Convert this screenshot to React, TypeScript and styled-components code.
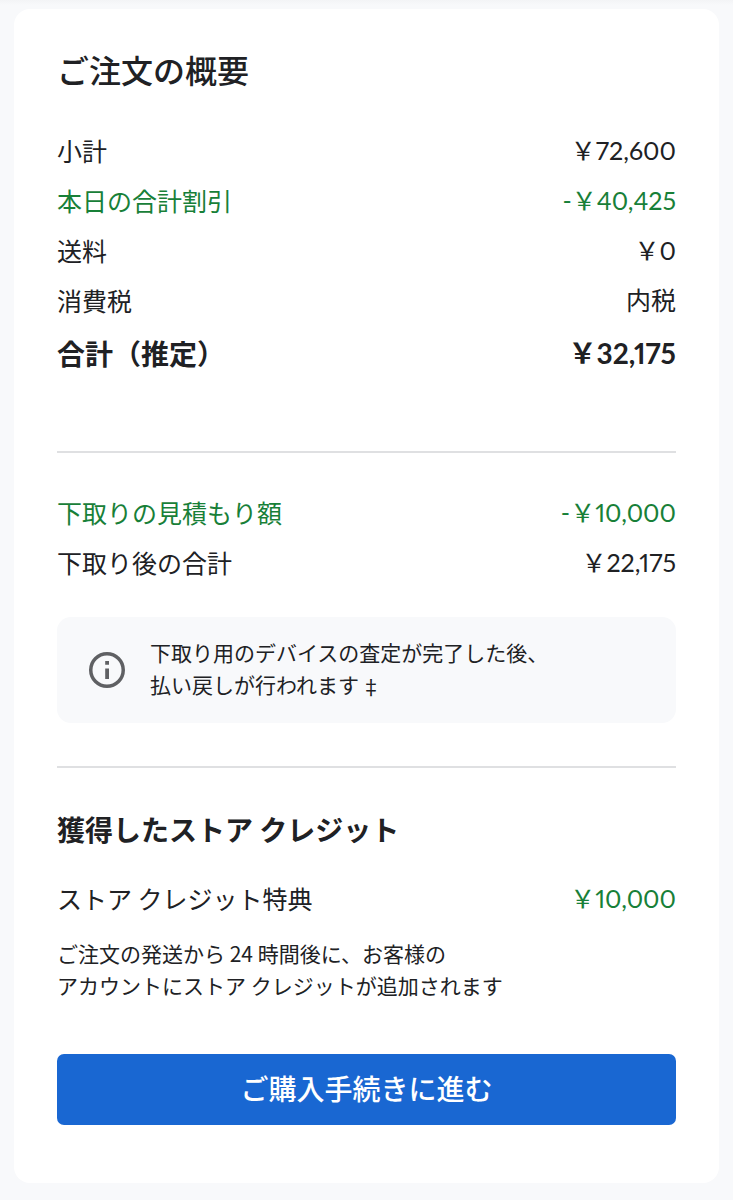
import React from "react";
import styled, { createGlobalStyle } from "styled-components";

const colors = {
  page: "#f8f9fb",
  card: "#ffffff",
  text: "#202124",
  green: "#188038",
  line: "#dfe0e2",
  icon: "#5f6063",
  blue: "#1967d2",
};

const GlobalStyle = createGlobalStyle`
  *, *::before, *::after { box-sizing: border-box; }
  body {
    margin: 0;
    background: ${colors.page};
    color: ${colors.text};
    font-family: "Noto Sans CJK JP", sans-serif;
  }
`;

const Page = styled.main`
  min-height: 100vh;
  padding: 9px 14px 17px;
  background: linear-gradient(#f3f4f6, ${colors.page} 5px);
`;

const Card = styled.section`
  padding: 40px 43px 58px;
  border-radius: 16px;
  background: ${colors.card};
`;

const Title = styled.h1`
  margin: 0 0 36px;
  font-size: 32px;
  line-height: 40px;
  font-weight: 500;
`;

const SubTitle = styled.h2`
  margin: 0 0 24px;
  font-size: 28px;
  line-height: 40px;
  font-weight: 700;
`;

const Rows = styled.dl`
  margin: 0;
`;

const Row = styled.div<{ $total?: boolean }>`
  display: flex;
  justify-content: space-between;
  gap: 16px;
  font-size: ${(p) => (p.$total ? 28 : 25)}px;
  font-weight: ${(p) => (p.$total ? 700 : 400)};
  line-height: ${(p) => (p.$total ? 56 : 50)}px;
`;

const Label = styled.dt<{ $green?: boolean }>`
  color: ${(p) => (p.$green ? colors.green : colors.text)};
`;

const Amount = styled.dd<{ $green?: boolean }>`
  margin: 0;
  color: ${(p) => (p.$green ? colors.green : colors.text)};
  font-family: "Lato", "Noto Sans CJK JP", sans-serif;
  font-variant-numeric: proportional-nums;
  white-space: nowrap;
`;

const Divider = styled.hr<{ $before: number; $after: number }>`
  height: 2px;
  margin: ${(p) => p.$before}px 0 ${(p) => p.$after}px;
  border: 0;
  background: ${colors.line};
`;

const Notice = styled.aside`
  display: flex;
  align-items: center;
  gap: 24px;
  margin-top: 30px;
  padding: 19px 31px;
  border-radius: 14px;
  background: ${colors.page};
`;

const InfoIcon = styled.svg`
  flex: none;
  width: 38px;
  height: 38px;
  fill: ${colors.icon};
`;

const Note = styled.p`
  margin: 0;
  padding-bottom: 4px;
  font-size: 21px;
  line-height: 32px;
`;

const Mark = styled.small`
  margin-left: 2px;
  font-size: 20px;
  line-height: 1;
  vertical-align: -2px;
`;

const CreditNote = styled(Note)`
  margin: 14px 0 49px;
`;

const CheckoutButton = styled.button`
  display: block;
  width: 100%;
  padding: 14px 24px 17px;
  border: 0;
  border-radius: 7px;
  background: ${colors.blue};
  color: #ffffff;
  font-family: inherit;
  font-size: 28px;
  font-weight: 500;
  line-height: 40px;
  cursor: pointer;
`;

type Line = {
  label: string;
  amount: string;
  green?: "row" | "amount";
  total?: boolean;
};

const orderLines: Line[] = [
  { label: "小計", amount: "￥72,600" },
  { label: "本日の合計割引", amount: "-￥40,425", green: "row" },
  { label: "送料", amount: "￥0" },
  { label: "消費税", amount: "内税" },
  { label: "合計（推定）", amount: "￥32,175", total: true },
];

const tradeInLines: Line[] = [
  { label: "下取りの見積もり額", amount: "-￥10,000", green: "row" },
  { label: "下取り後の合計", amount: "￥22,175" },
];

const creditLines: Line[] = [
  { label: "ストア クレジット特典", amount: "￥10,000", green: "amount" },
];

function Lines({ lines }: { lines: Line[] }) {
  return (
    <Rows>
      {lines.map((line) => (
        <Row key={line.label} $total={line.total}>
          <Label $green={line.green === "row"}>{line.label}</Label>
          <Amount $green={Boolean(line.green)}>{line.amount}</Amount>
        </Row>
      ))}
    </Rows>
  );
}

export default function App() {
  return (
    <>
      <GlobalStyle />
      <Page lang="ja">
        <Card>
          <Title>ご注文の概要</Title>
          <Lines lines={orderLines} />
          <Divider $before={70} $after={34} />
          <Lines lines={tradeInLines} />
          <Notice>
            <InfoIcon viewBox="0 0 38 38" aria-hidden="true">
              <path d="M19 1a18 18 0 1 0 0 36 18 18 0 0 0 0-36Zm0 32.500a14.500 14.500 0 1 1 0-29 14.500 14.500 0 0 1 0 29Z" />
              <path d="M17.200 17.500h3.800v10.500h-3.800zM17.200 10h3.800v3.800h-3.800z" />
            </InfoIcon>
            <Note>
              下取り用のデバイスの査定が完了した後、
              <br />
              払い戻しが行われます<Mark>‡</Mark>
            </Note>
          </Notice>
          <Divider $before={43} $after={41} />
          <SubTitle>獲得したストア クレジット</SubTitle>
          <Lines lines={creditLines} />
          <CreditNote>
            ご注文の発送から 24 時間後に、お客様の
            <br />
            アカウントにストア クレジットが追加されます
          </CreditNote>
          <CheckoutButton type="button">ご購入手続きに進む</CheckoutButton>
        </Card>
      </Page>
    </>
  );
}
